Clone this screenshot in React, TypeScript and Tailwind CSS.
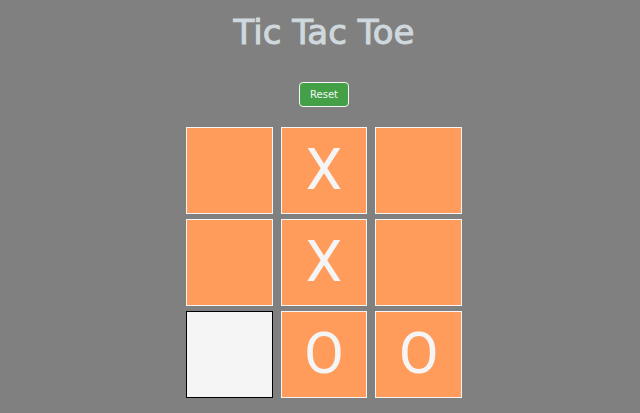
import { useState } from "react";

type Mark = "X" | "O" | "";

const START: Mark[] = ["", "X", "", "", "X", "", "", "O", "O"];

function Cell({ mark, active, label, onPlay }: { mark: Mark; active: boolean; label: string; onPlay: () => void }) {
  const colours = active ? "border-black bg-[#f5f5f5]" : "border-[#f5f5f5] bg-[#ff9c5b]";
  return (
    <button
      type="button"
      aria-label={label}
      onClick={onPlay}
      className={`flex h-[87px] items-center justify-center border pb-1 font-['Roboto',sans-serif] text-[58px] leading-none text-[#f5f5f5] ${colours}`}
    >
      {mark}
    </button>
  );
}

export default function App() {
  const [cells, setCells] = useState<Mark[]>(START);
  const [active, setActive] = useState(6);

  const play = (index: number) => {
    setActive(index);
    if (cells[index]) return;
    const turn: Mark = cells.filter(Boolean).length % 2 === 0 ? "X" : "O";
    setCells(cells.map((mark, i) => (i === index ? turn : mark)));
  };

  const reset = () => {
    setCells(cells.map(() => ""));
    setActive(-1);
  };

  return (
    <main className="flex min-h-screen flex-col items-center bg-[#808080] pt-3 pb-3 pl-2 font-['DejaVu_Sans',sans-serif]">
      <h1 className="text-[34px] leading-10 text-[#cfd8dc] [-webkit-text-stroke:1px_#cfd8dc]">Tic Tac Toe</h1>
      <button
        type="button"
        onClick={reset}
        className="mt-[30px] h-[25px] w-[50px] rounded border border-[#f5f5f5] bg-[#43a047] text-[10px] leading-none text-[#f5f5f5]"
      >
        Reset
      </button>
      <div className="mt-5 grid w-full max-w-[276px] grid-cols-3 gap-x-2 gap-y-[5px]">
        {cells.map((mark, i) => (
          <Cell key={i} mark={mark} active={i === active} label={`Square ${i + 1} ${mark}`} onPlay={() => play(i)} />
        ))}
      </div>
    </main>
  );
}
